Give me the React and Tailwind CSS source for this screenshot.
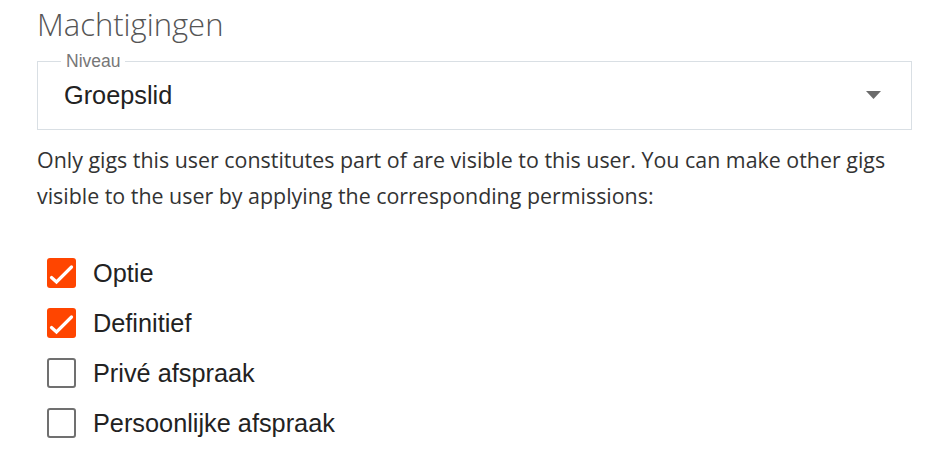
const options = [
  { label: 'Optie', checked: true },
  { label: 'Definitief', checked: true },
  { label: 'Privé afspraak', checked: false },
  { label: 'Persoonlijke afspraak', checked: false },
];

const sans = { fontFamily: '"Liberation Sans", Arial, sans-serif' };
const openSans = { fontFamily: '"Open Sans", sans-serif' };

function Checkbox({ checked }) {
  if (checked) {
    return (
      <span className="flex h-[30px] w-[29px] shrink-0 items-center justify-center rounded-[3px] bg-[#ff4500]">
        <svg width="29" height="30" viewBox="0 0 29 30" fill="none">
          <path d="M4.5 19.5 L9.5 24 L24.5 9" stroke="white" strokeWidth="3.2" strokeLinecap="round" strokeLinejoin="miter" />
        </svg>
      </span>
    );
  }
  return <span className="block h-[30px] w-[29px] shrink-0 rounded-[3px] border-[2.5px] border-[#707070] bg-white" />;
}

export default function App() {
  return (
    <div className="h-[473px] w-[939px] overflow-hidden bg-white pl-[37px] pt-[2px]">
      <h2 className="text-[31px] font-light leading-[44px] text-[#555]" style={openSans}>
        Machtigingen
      </h2>

      <fieldset className="mt-[5px] w-[875px] border border-[#d9dfe4] px-[23px]" style={sans}>
        <legend className="px-[5px] text-[17.5px] leading-[20px] text-[#777]">Niveau</legend>
        <div className="flex items-center justify-between pb-[19px] pl-[3px] pr-[7px] pt-[9px]">
          <span className="text-[25.3px] leading-[30px] text-[#222]">Groepslid</span>
          <svg width="15" height="8" viewBox="0 0 15 8">
            <path d="M0 0 H15 L7.5 8 Z" fill="#6b6b6b" />
          </svg>
        </div>
      </fieldset>

      <p className="mt-[12px] w-[875px] text-[21.4px] leading-[36px] text-[#333]" style={openSans}>
        Only gigs this user constitutes part of are visible to this user. You can make other gigs visible to the user by applying the corresponding permissions:
      </p>

      <ul className="mt-[34px]" style={sans}>
        {options.map((o) => (
          <li key={o.label} className="flex h-[50px] items-center gap-[17px] pl-[10px]">
            <Checkbox checked={o.checked} />
            <span className="text-[25.3px] leading-[30px] text-[#222]">{o.label}</span>
          </li>
        ))}
      </ul>
    </div>
  );
}
